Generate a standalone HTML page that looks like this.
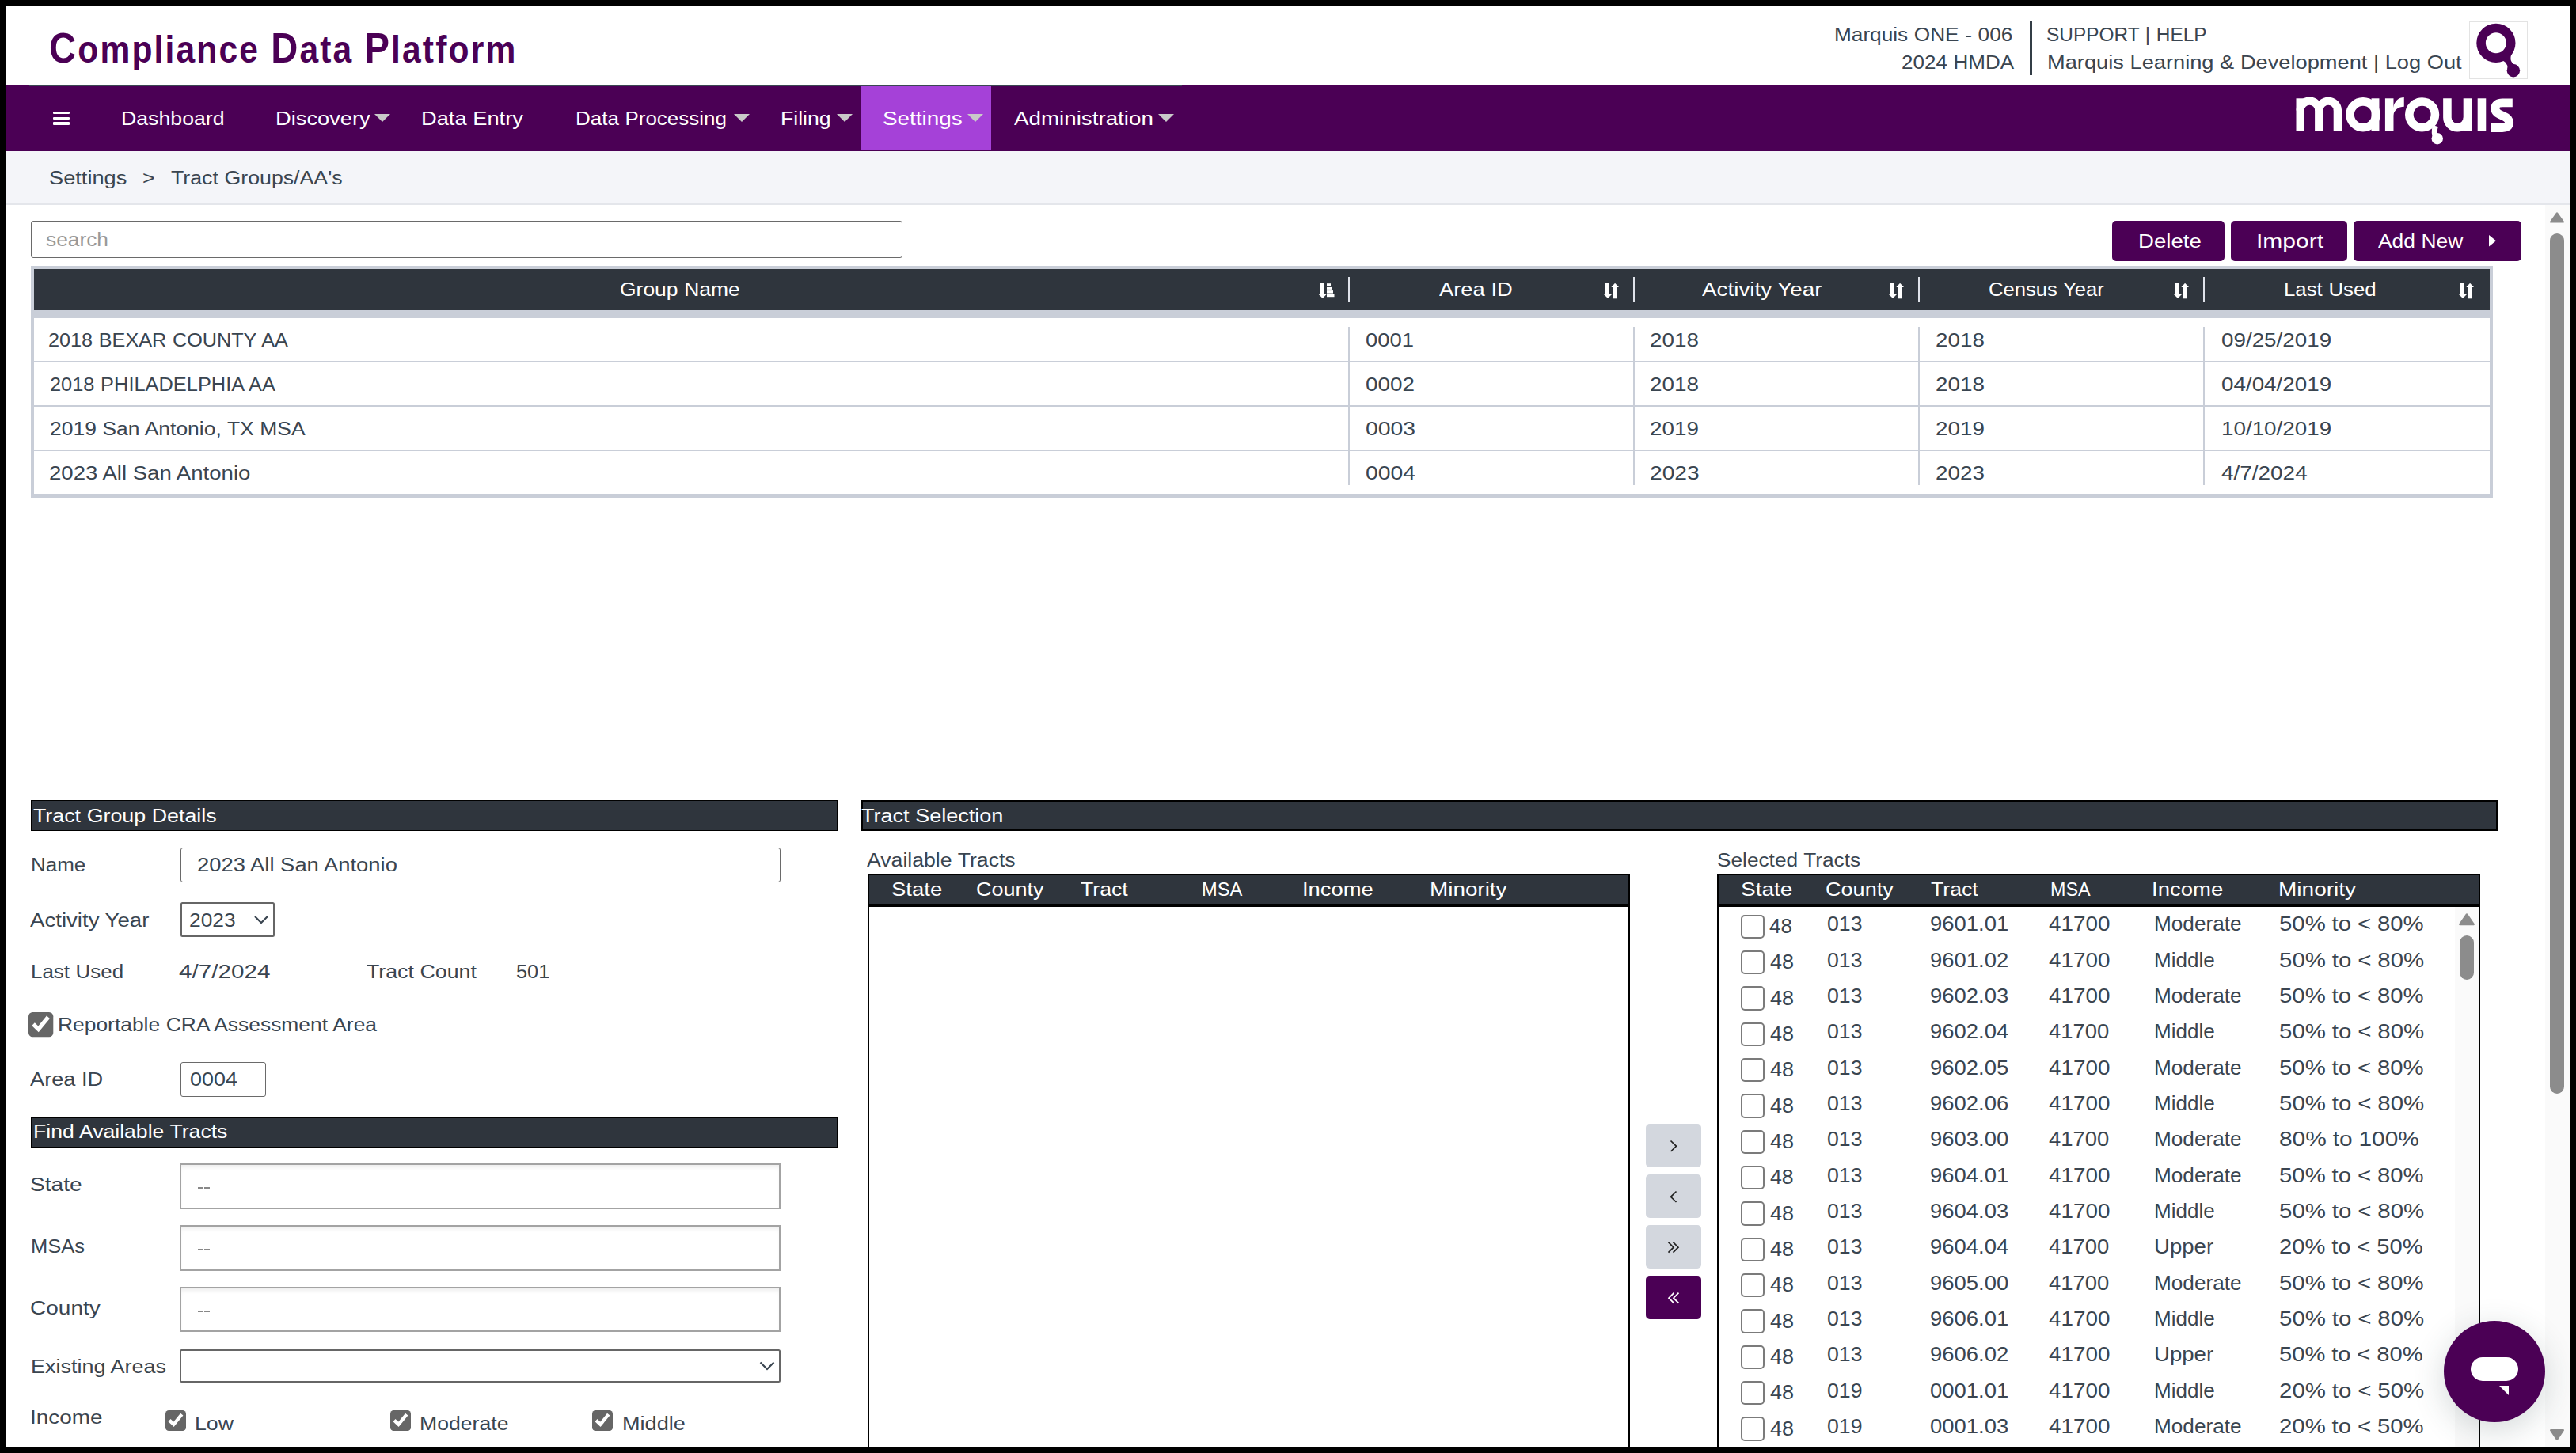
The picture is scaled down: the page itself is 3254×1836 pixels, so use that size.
<!DOCTYPE html>
<html><head><meta charset="utf-8"><title>Tract Groups</title>
<style>
html,body{margin:0;padding:0;width:3254px;height:1836px;overflow:hidden;background:#fff;}
body{position:relative;font-family:"Liberation Sans",sans-serif;}
.t{position:absolute;white-space:nowrap;transform-origin:0 0;}
.r{position:absolute;}
</style></head><body>
<div class="t" style="left:62.0px;top:35.82px;font-size:49px;line-height:49px;color:#4b0055;font-weight:bold;transform:scaleX(0.868);letter-spacing:2.5px;"><span style="font-size:111%">C</span>ompliance <span style="font-size:111%">D</span>ata <span style="font-size:111%">P</span>latform</div>
<div class="t" style="left:2402.00px;top:66.87px;font-size:24.84px;line-height:24.84px;color:#3a4550;transform:scaleX(1.0483);word-spacing:0.37px;">2024 HMDA</div>
<div class="t" style="left:2316.50px;top:32.27px;font-size:24.84px;line-height:24.84px;color:#3a4550;transform:scaleX(1.0553);word-spacing:0.33px;">Marquis ONE - 006</div>
<div class="r" style="left:2564px;top:27px;width:2.50px;height:68.00px;background:#333d46;"></div>
<div class="t" style="left:2585.40px;top:32.27px;font-size:24.84px;line-height:24.84px;color:#3a4550;transform:scaleX(0.9838);word-spacing:0.85px;">SUPPORT | HELP</div>
<div class="t" style="left:2586.00px;top:66.87px;font-size:24.84px;line-height:24.84px;color:#3a4550;transform:scaleX(1.0970);word-spacing:0.05px;">Marquis Learning &amp; Development | Log Out</div>
<div class="r" style="left:3119px;top:27px;width:74.00px;height:73.00px;box-sizing:border-box;border:1px solid #e3e3e3;"></div>
<svg class="r" style="left:3110px;top:20px" width="90" height="90" viewBox="0 0 90 90"><circle cx="42.9" cy="34.3" r="18.8" fill="none" stroke="#4b0055" stroke-width="11.6"/><path d="M48,56 Q58,57 57.5,67 L67,62 Q58,57 63.5,46 Z" fill="#4b0055"/><circle cx="64.9" cy="69.2" r="8.2" fill="#4b0055"/></svg>
<div class="r" style="left:7px;top:107px;width:3240.00px;height:84.00px;background:#4b0055;"></div>
<div class="r" style="left:37px;top:107px;width:1456.00px;height:2.00px;background:#3a4752;"></div>
<div class="r" style="left:1087px;top:109px;width:164.70px;height:80.00px;background:#a541d8;"></div>
<div class="r" style="left:67px;top:140.8px;width:21.00px;height:3.70px;background:#fff;border-radius:1px;"></div>
<div class="r" style="left:67px;top:147.5px;width:21.00px;height:3.70px;background:#fff;border-radius:1px;"></div>
<div class="r" style="left:67px;top:154.3px;width:21.00px;height:3.70px;background:#fff;border-radius:1px;"></div>
<div class="t" style="left:152.50px;top:138.07px;font-size:24.84px;line-height:24.84px;color:#fff;transform:scaleX(1.0747);">Dashboard</div>
<div class="t" style="left:348.40px;top:138.07px;font-size:24.84px;line-height:24.84px;color:#fff;transform:scaleX(1.0982);">Discovery</div>
<svg class="r" style="left:473px;top:144px" width="20" height="10" viewBox="0 0 20 10"><polygon points="0,0 20,0 10,10" fill="#c9c9c9"/></svg>
<div class="t" style="left:531.60px;top:138.07px;font-size:24.84px;line-height:24.84px;color:#fff;transform:scaleX(1.0987);word-spacing:0.04px;">Data Entry</div>
<div class="t" style="left:726.62px;top:138.07px;font-size:24.84px;line-height:24.84px;color:#fff;transform:scaleX(1.0456);word-spacing:0.39px;">Data Processing</div>
<svg class="r" style="left:926.8px;top:144px" width="20" height="10" viewBox="0 0 20 10"><polygon points="0,0 20,0 10,10" fill="#c9c9c9"/></svg>
<div class="t" style="left:986.44px;top:138.07px;font-size:24.84px;line-height:24.84px;color:#fff;transform:scaleX(1.0732);">Filing</div>
<svg class="r" style="left:1057px;top:144px" width="20" height="10" viewBox="0 0 20 10"><polygon points="0,0 20,0 10,10" fill="#c9c9c9"/></svg>
<div class="t" style="left:1115.20px;top:138.07px;font-size:24.84px;line-height:24.84px;color:#fff;transform:scaleX(1.1233);">Settings</div>
<svg class="r" style="left:1222px;top:144px" width="20" height="10" viewBox="0 0 20 10"><polygon points="0,0 20,0 10,10" fill="#c9c9c9"/></svg>
<div class="t" style="left:1280.70px;top:138.07px;font-size:24.84px;line-height:24.84px;color:#fff;transform:scaleX(1.1176);">Administration</div>
<svg class="r" style="left:1462.6px;top:144px" width="20" height="10" viewBox="0 0 20 10"><polygon points="0,0 20,0 10,10" fill="#c9c9c9"/></svg>
<svg class="r" style="left:2880px;top:110px" width="320" height="80" viewBox="0 0 2576 644"><g fill="#fff" stroke="none">
<rect x="165" y="115" width="83" height="335"/>
<rect x="355" y="228" width="85" height="222"/>
<rect x="545" y="228" width="85" height="222"/>
<rect x="930" y="115" width="80" height="335"/>
<rect x="1070" y="115" width="85" height="335"/>
<path d="M1150,215 C1165,140 1210,105 1262,105 L1262,200 C1205,200 1160,235 1152,290 Z"/>
<rect x="1865" y="115" width="85" height="335"/>
<rect x="2010" y="115" width="85" height="335"/>
<circle cx="1600" cy="525" r="58"/>
</g>
<g fill="none" stroke="#fff">
<path d="M206,238 A95,95 0 0 1 397,238" stroke-width="82"/>
<path d="M397,238 A95,95 0 0 1 587,238" stroke-width="82"/>
<circle cx="845" cy="280" r="132" stroke-width="85"/>

<circle cx="1446" cy="280" r="131" stroke-width="86"/>
<path d="M1582,395 C1570,430 1560,470 1590,520" stroke-width="56"/>
<path d="M1702,115 V310 A103,103 0 0 0 1908,310" stroke-width="85"/>
<path d="M2365,160 H2262 C2218,160 2188,180 2188,215 C2188,262 2230,278 2268,293 C2308,310 2332,328 2332,365 C2332,398 2302,415 2262,415 H2145" stroke-width="88"/>
</g></svg>
<div class="r" style="left:7px;top:191px;width:3240.00px;height:66.00px;background:#f4f5f9;"></div>
<div class="r" style="left:7px;top:257px;width:3240.00px;height:2.00px;background:#e4e6eb;"></div>
<div class="t" style="left:61.56px;top:213.17px;font-size:24.84px;line-height:24.84px;color:#3a4550;transform:scaleX(1.0957);">Settings</div>
<div class="t" style="left:180.00px;top:213.17px;font-size:24.84px;line-height:24.84px;color:#3a4550;transform:scaleX(1.0628);">&gt;</div>
<div class="t" style="left:216.00px;top:213.17px;font-size:24.84px;line-height:24.84px;color:#3a4550;transform:scaleX(1.0760);word-spacing:0.19px;">Tract Groups/AA&#x27;s</div>
<div class="r" style="left:3215px;top:259px;width:31.00px;height:1570.00px;background:#fafafa;"></div>
<div class="r" style="left:3246px;top:259px;width:1.00px;height:1570.00px;background:#e8e8e8;"></div>
<svg class="r" style="left:3219px;top:266px" width="22" height="18" viewBox="0 0 22 18"><polygon points="11,3.4 18.8,14.4 3.2,14.4" fill="#8c8c8c" stroke="#8c8c8c" stroke-width="2.4" stroke-linejoin="round"/></svg>
<div class="r" style="left:3221px;top:295px;width:18.00px;height:1087.00px;background:#8c8c8c;border-radius:9px;"></div>
<svg class="r" style="left:3219px;top:1804px" width="22" height="18" viewBox="0 0 22 18"><polygon points="3.2,3.2 18.8,3.2 11,14.8" fill="#8c8c8c" stroke="#8c8c8c" stroke-width="2.4" stroke-linejoin="round"/></svg>
<div class="r" style="left:39px;top:279px;width:1101.00px;height:47.00px;box-sizing:border-box;border:1.6px solid #6a6a6a;border-radius:3px;background:#fff;"></div>
<div class="t" style="left:57.60px;top:290.67px;font-size:24.84px;line-height:24.84px;color:#999;transform:scaleX(1.0593);">search</div>
<div class="r" style="left:2668px;top:279px;width:142.00px;height:51.00px;background:#4b0055;border-radius:5px;"></div>
<div class="t" style="left:2700.68px;top:292.57px;font-size:24.84px;line-height:24.84px;color:#fff;transform:scaleX(1.1118);">Delete</div>
<div class="r" style="left:2818px;top:279px;width:147.00px;height:51.00px;background:#4b0055;border-radius:5px;"></div>
<div class="t" style="left:2849.70px;top:292.57px;font-size:24.84px;line-height:24.84px;color:#fff;transform:scaleX(1.2077);">Import</div>
<div class="r" style="left:2973px;top:279px;width:212.00px;height:51.00px;background:#4b0055;border-radius:5px;"></div>
<div class="t" style="left:3004.46px;top:292.57px;font-size:24.84px;line-height:24.84px;color:#fff;transform:scaleX(1.0619);word-spacing:0.28px;">Add New</div>
<svg class="r" style="left:3143px;top:296px" width="11" height="17" viewBox="0 0 11 17"><polygon points="1,1 10,8.3 1,15.6" fill="#fff"/></svg>
<div class="r" style="left:39px;top:336px;width:3110.00px;height:293.00px;background:#c9ced8;"></div>
<div class="r" style="left:43px;top:340px;width:3102.00px;height:51.70px;background:#2f353d;"></div>
<div class="r" style="left:43px;top:402px;width:3102.00px;height:222.00px;background:#fff;"></div>
<div class="r" style="left:43px;top:456px;width:3102.00px;height:2.00px;background:#c9ced8;"></div>
<div class="r" style="left:43px;top:512px;width:3102.00px;height:2.00px;background:#c9ced8;"></div>
<div class="r" style="left:43px;top:568px;width:3102.00px;height:2.00px;background:#c9ced8;"></div>
<div class="r" style="left:1703px;top:413px;width:2.00px;height:199.50px;background:#c9ced8;"></div>
<div class="r" style="left:1703px;top:350px;width:2.30px;height:32.00px;background:#dfe2ea;"></div>
<div class="r" style="left:2063px;top:413px;width:2.00px;height:199.50px;background:#c9ced8;"></div>
<div class="r" style="left:2063px;top:350px;width:2.30px;height:32.00px;background:#dfe2ea;"></div>
<div class="r" style="left:2423px;top:413px;width:2.00px;height:199.50px;background:#c9ced8;"></div>
<div class="r" style="left:2423px;top:350px;width:2.30px;height:32.00px;background:#dfe2ea;"></div>
<div class="r" style="left:2783px;top:413px;width:2.00px;height:199.50px;background:#c9ced8;"></div>
<div class="r" style="left:2783px;top:350px;width:2.30px;height:32.00px;background:#dfe2ea;"></div>
<div class="t" style="left:782.90px;top:354.07px;font-size:24.84px;line-height:24.84px;color:#fff;transform:scaleX(1.0655);word-spacing:0.26px;">Group Name</div>
<div class="t" style="left:1818.40px;top:354.07px;font-size:24.84px;line-height:24.84px;color:#fff;transform:scaleX(1.1012);word-spacing:0.03px;">Area ID</div>
<div class="t" style="left:2150.00px;top:354.07px;font-size:24.84px;line-height:24.84px;color:#fff;transform:scaleX(1.1209);word-spacing:-0.10px;">Activity Year</div>
<div class="t" style="left:2512.30px;top:354.07px;font-size:24.84px;line-height:24.84px;color:#fff;transform:scaleX(1.0314);word-spacing:0.49px;">Census Year</div>
<div class="t" style="left:2885.44px;top:354.07px;font-size:24.84px;line-height:24.84px;color:#fff;transform:scaleX(1.0392);word-spacing:0.44px;">Last Used</div>
<svg class="r" style="left:1660px;top:352px" width="30" height="30" viewBox="0 0 30 30"><g fill="#fff"><rect x="8" y="5.7" width="5" height="14.5"/><polygon points="5.8,20 15.6,20 10.7,25"/><rect x="16" y="6.2" width="5" height="3"/><rect x="16" y="10.9" width="6" height="3"/><rect x="16" y="15.1" width="8" height="3.5"/><rect x="16" y="19.9" width="9.5" height="3.3"/></g></svg>
<svg class="r" style="left:2024px;top:352px" width="24" height="30" viewBox="0 0 24 30"><g fill="#fff"><rect x="4" y="5.7" width="5" height="14.5"/><polygon points="2,20 12,20 7,25"/><rect x="14" y="10.8" width="4.2" height="14.5"/><polygon points="11.3,11 21,11 16.1,5.7"/></g></svg>
<svg class="r" style="left:2384px;top:352px" width="24" height="30" viewBox="0 0 24 30"><g fill="#fff"><rect x="4" y="5.7" width="5" height="14.5"/><polygon points="2,20 12,20 7,25"/><rect x="14" y="10.8" width="4.2" height="14.5"/><polygon points="11.3,11 21,11 16.1,5.7"/></g></svg>
<svg class="r" style="left:2744px;top:352px" width="24" height="30" viewBox="0 0 24 30"><g fill="#fff"><rect x="4" y="5.7" width="5" height="14.5"/><polygon points="2,20 12,20 7,25"/><rect x="14" y="10.8" width="4.2" height="14.5"/><polygon points="11.3,11 21,11 16.1,5.7"/></g></svg>
<svg class="r" style="left:3104px;top:352px" width="24" height="30" viewBox="0 0 24 30"><g fill="#fff"><rect x="4" y="5.7" width="5" height="14.5"/><polygon points="2,20 12,20 7,25"/><rect x="14" y="10.8" width="4.2" height="14.5"/><polygon points="11.3,11 21,11 16.1,5.7"/></g></svg>
<div class="t" style="left:61.32px;top:417.57px;font-size:24.84px;line-height:24.84px;color:#3a4550;transform:scaleX(1.0162);word-spacing:0.61px;">2018 BEXAR COUNTY AA</div>
<div class="t" style="left:1725.40px;top:417.57px;font-size:24.84px;line-height:24.84px;color:#3a4550;transform:scaleX(1.1033);">0001</div>
<div class="t" style="left:2084.32px;top:417.57px;font-size:24.84px;line-height:24.84px;color:#3a4550;transform:scaleX(1.1214);">2018</div>
<div class="t" style="left:2445.00px;top:417.57px;font-size:24.84px;line-height:24.84px;color:#3a4550;transform:scaleX(1.1214);">2018</div>
<div class="t" style="left:2805.50px;top:417.57px;font-size:24.84px;line-height:24.84px;color:#3a4550;transform:scaleX(1.1197);">09/25/2019</div>
<div class="t" style="left:63.40px;top:473.57px;font-size:24.84px;line-height:24.84px;color:#3a4550;transform:scaleX(1.0227);word-spacing:0.56px;">2018 PHILADELPHIA AA</div>
<div class="t" style="left:1725.40px;top:473.57px;font-size:24.84px;line-height:24.84px;color:#3a4550;transform:scaleX(1.1207);">0002</div>
<div class="t" style="left:2084.32px;top:473.57px;font-size:24.84px;line-height:24.84px;color:#3a4550;transform:scaleX(1.1214);">2018</div>
<div class="t" style="left:2445.00px;top:473.57px;font-size:24.84px;line-height:24.84px;color:#3a4550;transform:scaleX(1.1214);">2018</div>
<div class="t" style="left:2805.50px;top:473.57px;font-size:24.84px;line-height:24.84px;color:#3a4550;transform:scaleX(1.1197);">04/04/2019</div>
<div class="t" style="left:63.40px;top:529.57px;font-size:24.84px;line-height:24.84px;color:#3a4550;transform:scaleX(1.0653);word-spacing:0.26px;">2019 San Antonio, TX MSA</div>
<div class="t" style="left:1725.40px;top:529.57px;font-size:24.84px;line-height:24.84px;color:#3a4550;transform:scaleX(1.1431);">0003</div>
<div class="t" style="left:2084.32px;top:529.57px;font-size:24.84px;line-height:24.84px;color:#3a4550;transform:scaleX(1.1214);">2019</div>
<div class="t" style="left:2445.00px;top:529.57px;font-size:24.84px;line-height:24.84px;color:#3a4550;transform:scaleX(1.1214);">2019</div>
<div class="t" style="left:2805.50px;top:529.57px;font-size:24.84px;line-height:24.84px;color:#3a4550;transform:scaleX(1.1197);">10/10/2019</div>
<div class="t" style="left:62.40px;top:585.57px;font-size:24.84px;line-height:24.84px;color:#3a4550;transform:scaleX(1.1103);word-spacing:-0.03px;">2023 All San Antonio</div>
<div class="t" style="left:1725.40px;top:585.57px;font-size:24.84px;line-height:24.84px;color:#3a4550;transform:scaleX(1.1410);">0004</div>
<div class="t" style="left:2084.32px;top:585.57px;font-size:24.84px;line-height:24.84px;color:#3a4550;transform:scaleX(1.1359);">2023</div>
<div class="t" style="left:2445.00px;top:585.57px;font-size:24.84px;line-height:24.84px;color:#3a4550;transform:scaleX(1.1214);">2023</div>
<div class="t" style="left:2805.50px;top:585.57px;font-size:24.84px;line-height:24.84px;color:#3a4550;transform:scaleX(1.1242);">4/7/2024</div>
<div class="r" style="left:39px;top:1011px;width:1019.00px;height:39.00px;box-sizing:border-box;border:1.7px solid #000;background:#2f353d;"></div>
<div class="t" style="left:42.00px;top:1018.67px;font-size:24.84px;line-height:24.84px;color:#fff;transform:scaleX(1.0789);word-spacing:0.17px;">Tract Group Details</div>
<div class="t" style="left:39.48px;top:1081.17px;font-size:24.84px;line-height:24.84px;color:#3a4550;transform:scaleX(1.0459);">Name</div>
<div class="r" style="left:227.6px;top:1070.6px;width:758.20px;height:44.80px;box-sizing:border-box;border:1.6px solid #6a6a6a;border-radius:3px;"></div>
<div class="t" style="left:249.30px;top:1081.17px;font-size:24.84px;line-height:24.84px;color:#3a4550;transform:scaleX(1.1033);word-spacing:0.01px;">2023 All San Antonio</div>
<div class="t" style="left:38.04px;top:1150.67px;font-size:24.84px;line-height:24.84px;color:#3a4550;transform:scaleX(1.1119);word-spacing:-0.04px;">Activity Year</div>
<div class="r" style="left:227.6px;top:1140px;width:119.40px;height:43.60px;box-sizing:border-box;border:2px solid #666;border-radius:2.5px;"></div>
<div class="t" style="left:238.70px;top:1150.67px;font-size:24.84px;line-height:24.84px;color:#3a4550;transform:scaleX(1.0610);">2023</div>
<svg class="r" style="left:320px;top:1155px" width="20" height="14" viewBox="0 0 20 14"><polyline points="2,3 10,11 18,3" fill="none" stroke="#3a4550" stroke-width="2.2"/></svg>
<div class="t" style="left:38.76px;top:1215.67px;font-size:24.84px;line-height:24.84px;color:#3a4550;transform:scaleX(1.0441);word-spacing:0.40px;">Last Used</div>
<div class="t" style="left:226.00px;top:1215.67px;font-size:24.84px;line-height:24.84px;color:#3a4550;transform:scaleX(1.1954);">4/7/2024</div>
<div class="t" style="left:463.40px;top:1215.67px;font-size:24.84px;line-height:24.84px;color:#3a4550;transform:scaleX(1.0762);word-spacing:0.19px;">Tract Count</div>
<div class="t" style="left:652.12px;top:1215.67px;font-size:24.84px;line-height:24.84px;color:#3a4550;transform:scaleX(1.0213);">501</div>
<svg class="r" style="left:36.3px;top:1279.3px" width="31.3" height="31.3" viewBox="0 0 30 30"><rect x="0" y="0" width="30" height="30" rx="5" fill="#666"/><polyline points="5.8,14.6 12,20.6 23.9,6.0" fill="none" stroke="#fff" stroke-width="5"/></svg>
<div class="t" style="left:73.24px;top:1282.67px;font-size:24.84px;line-height:24.84px;color:#3a4550;transform:scaleX(1.0635);word-spacing:0.27px;">Reportable CRA Assessment Area</div>
<div class="t" style="left:38.34px;top:1352.47px;font-size:24.84px;line-height:24.84px;color:#3a4550;transform:scaleX(1.0950);word-spacing:0.06px;">Area ID</div>
<div class="r" style="left:227.8px;top:1341.6px;width:108.70px;height:44.60px;box-sizing:border-box;border:1.6px solid #6a6a6a;border-radius:3px;"></div>
<div class="t" style="left:239.64px;top:1352.47px;font-size:24.84px;line-height:24.84px;color:#3a4550;transform:scaleX(1.0849);">0004</div>
<div class="r" style="left:39px;top:1411.5px;width:1019.00px;height:38.00px;box-sizing:border-box;border:1.7px solid #000;background:#2f353d;"></div>
<div class="t" style="left:41.88px;top:1418.47px;font-size:24.84px;line-height:24.84px;color:#fff;transform:scaleX(1.0712);word-spacing:0.22px;">Find Available Tracts</div>
<div class="t" style="left:38.36px;top:1484.87px;font-size:24.84px;line-height:24.84px;color:#3a4550;transform:scaleX(1.1349);">State</div>
<div class="r" style="left:227.2px;top:1470.0px;width:758.60px;height:57.80px;box-sizing:border-box;border:2px solid #a3a3a3;box-shadow:inset 0 5px 6px -3px rgba(0,0,0,0.09);"></div>
<div class="r" style="left:250px;top:1500.35px;width:7.20px;height:1.60px;background:#888;"></div>
<div class="r" style="left:258.3px;top:1500.35px;width:7.20px;height:1.60px;background:#888;"></div>
<div class="t" style="left:39.00px;top:1562.67px;font-size:24.84px;line-height:24.84px;color:#3a4550;transform:scaleX(1.0281);">MSAs</div>
<div class="r" style="left:227.2px;top:1548.3px;width:758.60px;height:57.30px;box-sizing:border-box;border:2px solid #a3a3a3;box-shadow:inset 0 5px 6px -3px rgba(0,0,0,0.09);"></div>
<div class="r" style="left:250px;top:1578.3999999999999px;width:7.20px;height:1.60px;background:#888;"></div>
<div class="r" style="left:258.3px;top:1578.3999999999999px;width:7.20px;height:1.60px;background:#888;"></div>
<div class="t" style="left:38.00px;top:1641.07px;font-size:24.84px;line-height:24.84px;color:#3a4550;transform:scaleX(1.1281);">County</div>
<div class="r" style="left:227.2px;top:1626.2px;width:758.60px;height:57.30px;box-sizing:border-box;border:2px solid #a3a3a3;box-shadow:inset 0 5px 6px -3px rgba(0,0,0,0.09);"></div>
<div class="r" style="left:250px;top:1656.3px;width:7.20px;height:1.60px;background:#888;"></div>
<div class="r" style="left:258.3px;top:1656.3px;width:7.20px;height:1.60px;background:#888;"></div>
<div class="t" style="left:39.00px;top:1714.67px;font-size:24.84px;line-height:24.84px;color:#3a4550;transform:scaleX(1.0860);word-spacing:0.12px;">Existing Areas</div>
<div class="r" style="left:227.4px;top:1705px;width:758.20px;height:42.20px;box-sizing:border-box;border:2px solid #666;border-radius:2.5px;"></div>
<svg class="r" style="left:958px;top:1719px" width="22" height="15" viewBox="0 0 22 15"><polyline points="2.5,2.5 11,11 19.5,2.5" fill="none" stroke="#3a4550" stroke-width="2.2"/></svg>
<div class="t" style="left:38.00px;top:1779.27px;font-size:24.84px;line-height:24.84px;color:#3a4550;transform:scaleX(1.1238);">Income</div>
<svg class="r" style="left:209.3px;top:1782px" width="26" height="26" viewBox="0 0 30 30"><rect x="0" y="0" width="30" height="30" rx="5" fill="#666"/><polyline points="5.8,14.6 12,20.6 23.9,6.0" fill="none" stroke="#fff" stroke-width="5"/></svg>
<div class="t" style="left:246.40px;top:1787.17px;font-size:24.84px;line-height:24.84px;color:#3a4550;transform:scaleX(1.0766);">Low</div>
<svg class="r" style="left:493.3px;top:1782px" width="26" height="26" viewBox="0 0 30 30"><rect x="0" y="0" width="30" height="30" rx="5" fill="#666"/><polyline points="5.8,14.6 12,20.6 23.9,6.0" fill="none" stroke="#fff" stroke-width="5"/></svg>
<div class="t" style="left:530.32px;top:1787.17px;font-size:24.84px;line-height:24.84px;color:#3a4550;transform:scaleX(1.0721);">Moderate</div>
<svg class="r" style="left:748.3px;top:1782px" width="26" height="26" viewBox="0 0 30 30"><rect x="0" y="0" width="30" height="30" rx="5" fill="#666"/><polyline points="5.8,14.6 12,20.6 23.9,6.0" fill="none" stroke="#fff" stroke-width="5"/></svg>
<div class="t" style="left:785.60px;top:1787.17px;font-size:24.84px;line-height:24.84px;color:#3a4550;transform:scaleX(1.0922);">Middle</div>
<div class="r" style="left:1088px;top:1011px;width:2067.00px;height:39.00px;box-sizing:border-box;border:2px solid #000;background:#2f353d;"></div>
<div class="t" style="left:1088.28px;top:1018.67px;font-size:24.84px;line-height:24.84px;color:#fff;transform:scaleX(1.0888);word-spacing:0.10px;">Tract Selection</div>
<div class="t" style="left:1094.98px;top:1075.37px;font-size:24.84px;line-height:24.84px;color:#3a4550;transform:scaleX(1.0724);word-spacing:0.21px;">Available Tracts</div>
<div class="t" style="left:2169.34px;top:1075.37px;font-size:24.84px;line-height:24.84px;color:#3a4550;transform:scaleX(1.0564);word-spacing:0.32px;">Selected Tracts</div>
<div class="r" style="left:1096px;top:1104px;width:963.00px;height:736.00px;box-sizing:border-box;border:2px solid #000;background:#fff;"></div>
<div class="r" style="left:1098px;top:1106px;width:959.00px;height:36.00px;background:#2f353d;"></div>
<div class="r" style="left:1098px;top:1142px;width:959.00px;height:4.00px;background:#000;"></div>
<div class="t" style="left:1126.44px;top:1111.87px;font-size:24.84px;line-height:24.84px;color:#fff;transform:scaleX(1.1080);">State</div>
<div class="t" style="left:1232.82px;top:1111.87px;font-size:24.84px;line-height:24.84px;color:#fff;transform:scaleX(1.0880);">County</div>
<div class="t" style="left:1365.10px;top:1111.87px;font-size:24.84px;line-height:24.84px;color:#fff;transform:scaleX(1.0743);">Tract</div>
<div class="t" style="left:1517.76px;top:1111.87px;font-size:24.84px;line-height:24.84px;color:#fff;transform:scaleX(0.9524);">MSA</div>
<div class="t" style="left:1644.64px;top:1111.87px;font-size:24.84px;line-height:24.84px;color:#fff;transform:scaleX(1.1032);">Income</div>
<div class="t" style="left:1805.86px;top:1111.87px;font-size:24.84px;line-height:24.84px;color:#fff;transform:scaleX(1.1219);">Minority</div>
<div class="r" style="left:2169px;top:1104px;width:964.00px;height:736.00px;box-sizing:border-box;border:2px solid #000;background:#fff;"></div>
<div class="r" style="left:2171px;top:1106px;width:960.00px;height:36.00px;background:#2f353d;"></div>
<div class="r" style="left:2171px;top:1142px;width:960.00px;height:4.00px;background:#000;"></div>
<div class="t" style="left:2198.84px;top:1111.87px;font-size:24.84px;line-height:24.84px;color:#fff;transform:scaleX(1.1291);">State</div>
<div class="t" style="left:2306.14px;top:1111.87px;font-size:24.84px;line-height:24.84px;color:#fff;transform:scaleX(1.0903);">County</div>
<div class="t" style="left:2438.96px;top:1111.87px;font-size:24.84px;line-height:24.84px;color:#fff;transform:scaleX(1.0747);">Tract</div>
<div class="t" style="left:2590.00px;top:1111.87px;font-size:24.84px;line-height:24.84px;color:#fff;transform:scaleX(0.9402);">MSA</div>
<div class="t" style="left:2717.90px;top:1111.87px;font-size:24.84px;line-height:24.84px;color:#fff;transform:scaleX(1.1086);">Income</div>
<div class="t" style="left:2877.72px;top:1111.87px;font-size:24.84px;line-height:24.84px;color:#fff;transform:scaleX(1.1286);">Minority</div>
<div class="r" style="left:3101px;top:1146px;width:30.00px;height:683.00px;background:#fafafa;"></div>
<svg class="r" style="left:3105px;top:1153px" width="22" height="18" viewBox="0 0 22 18"><polygon points="11,2.5 19.6,15 2.4,15" fill="#8c8c8c" stroke="#8c8c8c" stroke-width="2.6" stroke-linejoin="round"/></svg>
<div class="r" style="left:3107px;top:1182px;width:18.00px;height:56.00px;background:#8c8c8c;border-radius:9px;"></div>
<div class="r" style="left:2199px;top:1155.6px;width:30.20px;height:30.30px;box-sizing:border-box;border:2px solid #7b7b7b;border-radius:5px;"></div>
<div class="t" style="left:2234.50px;top:1158.16px;font-size:25.56px;line-height:25.56px;color:#3a4550;transform:scaleX(1.0162);">48</div>
<div class="t" style="left:2307.70px;top:1155.46px;font-size:25.56px;line-height:25.56px;color:#3a4550;transform:scaleX(1.0430);">013</div>
<div class="t" style="left:2438.34px;top:1155.46px;font-size:25.56px;line-height:25.56px;color:#3a4550;transform:scaleX(1.0738);">9601.01</div>
<div class="t" style="left:2587.74px;top:1155.46px;font-size:25.56px;line-height:25.56px;color:#3a4550;transform:scaleX(1.0894);">41700</div>
<div class="t" style="left:2721.16px;top:1155.46px;font-size:25.56px;line-height:25.56px;color:#3a4550;transform:scaleX(1.0240);">Moderate</div>
<div class="t" style="left:2878.66px;top:1155.46px;font-size:25.56px;line-height:25.56px;color:#3a4550;transform:scaleX(1.1489);word-spacing:-0.27px;">50% to &lt; 80%</div>
<div class="r" style="left:2199px;top:1200.9299999999998px;width:30.20px;height:30.30px;box-sizing:border-box;border:2px solid #7b7b7b;border-radius:5px;"></div>
<div class="t" style="left:2235.78px;top:1203.49px;font-size:25.56px;line-height:25.56px;color:#3a4550;transform:scaleX(1.0598);">48</div>
<div class="t" style="left:2307.70px;top:1200.79px;font-size:25.56px;line-height:25.56px;color:#3a4550;transform:scaleX(1.0430);">013</div>
<div class="t" style="left:2438.34px;top:1200.79px;font-size:25.56px;line-height:25.56px;color:#3a4550;transform:scaleX(1.0738);">9601.02</div>
<div class="t" style="left:2587.74px;top:1200.79px;font-size:25.56px;line-height:25.56px;color:#3a4550;transform:scaleX(1.0894);">41700</div>
<div class="t" style="left:2721.16px;top:1200.79px;font-size:25.56px;line-height:25.56px;color:#3a4550;transform:scaleX(1.0198);">Middle</div>
<div class="t" style="left:2878.66px;top:1200.79px;font-size:25.56px;line-height:25.56px;color:#3a4550;transform:scaleX(1.1529);word-spacing:-0.29px;">50% to &lt; 80%</div>
<div class="r" style="left:2199px;top:1246.26px;width:30.20px;height:30.30px;box-sizing:border-box;border:2px solid #7b7b7b;border-radius:5px;"></div>
<div class="t" style="left:2235.78px;top:1248.82px;font-size:25.56px;line-height:25.56px;color:#3a4550;transform:scaleX(1.0598);">48</div>
<div class="t" style="left:2307.70px;top:1246.12px;font-size:25.56px;line-height:25.56px;color:#3a4550;transform:scaleX(1.0430);">013</div>
<div class="t" style="left:2438.34px;top:1246.12px;font-size:25.56px;line-height:25.56px;color:#3a4550;transform:scaleX(1.0738);">9602.03</div>
<div class="t" style="left:2587.74px;top:1246.12px;font-size:25.56px;line-height:25.56px;color:#3a4550;transform:scaleX(1.0894);">41700</div>
<div class="t" style="left:2721.16px;top:1246.12px;font-size:25.56px;line-height:25.56px;color:#3a4550;transform:scaleX(1.0240);">Moderate</div>
<div class="t" style="left:2878.66px;top:1246.12px;font-size:25.56px;line-height:25.56px;color:#3a4550;transform:scaleX(1.1489);word-spacing:-0.27px;">50% to &lt; 80%</div>
<div class="r" style="left:2199px;top:1291.59px;width:30.20px;height:30.30px;box-sizing:border-box;border:2px solid #7b7b7b;border-radius:5px;"></div>
<div class="t" style="left:2235.78px;top:1294.15px;font-size:25.56px;line-height:25.56px;color:#3a4550;transform:scaleX(1.0598);">48</div>
<div class="t" style="left:2307.70px;top:1291.45px;font-size:25.56px;line-height:25.56px;color:#3a4550;transform:scaleX(1.0430);">013</div>
<div class="t" style="left:2438.34px;top:1291.45px;font-size:25.56px;line-height:25.56px;color:#3a4550;transform:scaleX(1.0738);">9602.04</div>
<div class="t" style="left:2587.74px;top:1291.45px;font-size:25.56px;line-height:25.56px;color:#3a4550;transform:scaleX(1.0753);">41700</div>
<div class="t" style="left:2721.16px;top:1291.45px;font-size:25.56px;line-height:25.56px;color:#3a4550;transform:scaleX(1.0198);">Middle</div>
<div class="t" style="left:2878.66px;top:1291.45px;font-size:25.56px;line-height:25.56px;color:#3a4550;transform:scaleX(1.1529);word-spacing:-0.29px;">50% to &lt; 80%</div>
<div class="r" style="left:2199px;top:1336.9199999999998px;width:30.20px;height:30.30px;box-sizing:border-box;border:2px solid #7b7b7b;border-radius:5px;"></div>
<div class="t" style="left:2235.78px;top:1339.48px;font-size:25.56px;line-height:25.56px;color:#3a4550;transform:scaleX(1.0598);">48</div>
<div class="t" style="left:2307.70px;top:1336.78px;font-size:25.56px;line-height:25.56px;color:#3a4550;transform:scaleX(1.0430);">013</div>
<div class="t" style="left:2438.34px;top:1336.78px;font-size:25.56px;line-height:25.56px;color:#3a4550;transform:scaleX(1.0738);">9602.05</div>
<div class="t" style="left:2587.74px;top:1336.78px;font-size:25.56px;line-height:25.56px;color:#3a4550;transform:scaleX(1.0894);">41700</div>
<div class="t" style="left:2721.16px;top:1336.78px;font-size:25.56px;line-height:25.56px;color:#3a4550;transform:scaleX(1.0240);">Moderate</div>
<div class="t" style="left:2878.66px;top:1336.78px;font-size:25.56px;line-height:25.56px;color:#3a4550;transform:scaleX(1.1489);word-spacing:-0.27px;">50% to &lt; 80%</div>
<div class="r" style="left:2199px;top:1382.25px;width:30.20px;height:30.30px;box-sizing:border-box;border:2px solid #7b7b7b;border-radius:5px;"></div>
<div class="t" style="left:2235.78px;top:1384.81px;font-size:25.56px;line-height:25.56px;color:#3a4550;transform:scaleX(1.0598);">48</div>
<div class="t" style="left:2307.70px;top:1382.11px;font-size:25.56px;line-height:25.56px;color:#3a4550;transform:scaleX(1.0430);">013</div>
<div class="t" style="left:2438.34px;top:1382.11px;font-size:25.56px;line-height:25.56px;color:#3a4550;transform:scaleX(1.0738);">9602.06</div>
<div class="t" style="left:2587.74px;top:1382.11px;font-size:25.56px;line-height:25.56px;color:#3a4550;transform:scaleX(1.0894);">41700</div>
<div class="t" style="left:2721.16px;top:1382.11px;font-size:25.56px;line-height:25.56px;color:#3a4550;transform:scaleX(1.0198);">Middle</div>
<div class="t" style="left:2878.66px;top:1382.11px;font-size:25.56px;line-height:25.56px;color:#3a4550;transform:scaleX(1.1529);word-spacing:-0.29px;">50% to &lt; 80%</div>
<div class="r" style="left:2199px;top:1427.58px;width:30.20px;height:30.30px;box-sizing:border-box;border:2px solid #7b7b7b;border-radius:5px;"></div>
<div class="t" style="left:2235.78px;top:1430.14px;font-size:25.56px;line-height:25.56px;color:#3a4550;transform:scaleX(1.0598);">48</div>
<div class="t" style="left:2307.70px;top:1427.44px;font-size:25.56px;line-height:25.56px;color:#3a4550;transform:scaleX(1.0430);">013</div>
<div class="t" style="left:2438.34px;top:1427.44px;font-size:25.56px;line-height:25.56px;color:#3a4550;transform:scaleX(1.0738);">9603.00</div>
<div class="t" style="left:2587.74px;top:1427.44px;font-size:25.56px;line-height:25.56px;color:#3a4550;transform:scaleX(1.0753);">41700</div>
<div class="t" style="left:2721.16px;top:1427.44px;font-size:25.56px;line-height:25.56px;color:#3a4550;transform:scaleX(1.0240);">Moderate</div>
<div class="t" style="left:2878.66px;top:1427.44px;font-size:25.56px;line-height:25.56px;color:#3a4550;transform:scaleX(1.1694);word-spacing:-0.39px;">80% to 100%</div>
<div class="r" style="left:2199px;top:1472.9099999999999px;width:30.20px;height:30.30px;box-sizing:border-box;border:2px solid #7b7b7b;border-radius:5px;"></div>
<div class="t" style="left:2235.78px;top:1475.47px;font-size:25.56px;line-height:25.56px;color:#3a4550;transform:scaleX(1.0443);">48</div>
<div class="t" style="left:2307.70px;top:1472.77px;font-size:25.56px;line-height:25.56px;color:#3a4550;transform:scaleX(1.0430);">013</div>
<div class="t" style="left:2438.34px;top:1472.77px;font-size:25.56px;line-height:25.56px;color:#3a4550;transform:scaleX(1.0738);">9604.01</div>
<div class="t" style="left:2587.74px;top:1472.77px;font-size:25.56px;line-height:25.56px;color:#3a4550;transform:scaleX(1.0894);">41700</div>
<div class="t" style="left:2721.16px;top:1472.77px;font-size:25.56px;line-height:25.56px;color:#3a4550;transform:scaleX(1.0240);">Moderate</div>
<div class="t" style="left:2878.66px;top:1472.77px;font-size:25.56px;line-height:25.56px;color:#3a4550;transform:scaleX(1.1489);word-spacing:-0.27px;">50% to &lt; 80%</div>
<div class="r" style="left:2199px;top:1518.2399999999998px;width:30.20px;height:30.30px;box-sizing:border-box;border:2px solid #7b7b7b;border-radius:5px;"></div>
<div class="t" style="left:2235.78px;top:1520.80px;font-size:25.56px;line-height:25.56px;color:#3a4550;transform:scaleX(1.0598);">48</div>
<div class="t" style="left:2307.70px;top:1518.10px;font-size:25.56px;line-height:25.56px;color:#3a4550;transform:scaleX(1.0430);">013</div>
<div class="t" style="left:2438.34px;top:1518.10px;font-size:25.56px;line-height:25.56px;color:#3a4550;transform:scaleX(1.0738);">9604.03</div>
<div class="t" style="left:2587.74px;top:1518.10px;font-size:25.56px;line-height:25.56px;color:#3a4550;transform:scaleX(1.0894);">41700</div>
<div class="t" style="left:2721.16px;top:1518.10px;font-size:25.56px;line-height:25.56px;color:#3a4550;transform:scaleX(1.0198);">Middle</div>
<div class="t" style="left:2878.66px;top:1518.10px;font-size:25.56px;line-height:25.56px;color:#3a4550;transform:scaleX(1.1529);word-spacing:-0.29px;">50% to &lt; 80%</div>
<div class="r" style="left:2199px;top:1563.57px;width:30.20px;height:30.30px;box-sizing:border-box;border:2px solid #7b7b7b;border-radius:5px;"></div>
<div class="t" style="left:2235.78px;top:1566.13px;font-size:25.56px;line-height:25.56px;color:#3a4550;transform:scaleX(1.0598);">48</div>
<div class="t" style="left:2307.70px;top:1563.43px;font-size:25.56px;line-height:25.56px;color:#3a4550;transform:scaleX(1.0430);">013</div>
<div class="t" style="left:2438.34px;top:1563.43px;font-size:25.56px;line-height:25.56px;color:#3a4550;transform:scaleX(1.0738);">9604.04</div>
<div class="t" style="left:2587.74px;top:1563.43px;font-size:25.56px;line-height:25.56px;color:#3a4550;transform:scaleX(1.0753);">41700</div>
<div class="t" style="left:2721.16px;top:1563.43px;font-size:25.56px;line-height:25.56px;color:#3a4550;transform:scaleX(1.0798);">Upper</div>
<div class="t" style="left:2878.66px;top:1563.43px;font-size:25.56px;line-height:25.56px;color:#3a4550;transform:scaleX(1.1412);word-spacing:-0.22px;">20% to &lt; 50%</div>
<div class="r" style="left:2199px;top:1608.8999999999999px;width:30.20px;height:30.30px;box-sizing:border-box;border:2px solid #7b7b7b;border-radius:5px;"></div>
<div class="t" style="left:2235.78px;top:1611.46px;font-size:25.56px;line-height:25.56px;color:#3a4550;transform:scaleX(1.0598);">48</div>
<div class="t" style="left:2307.70px;top:1608.76px;font-size:25.56px;line-height:25.56px;color:#3a4550;transform:scaleX(1.0430);">013</div>
<div class="t" style="left:2438.34px;top:1608.76px;font-size:25.56px;line-height:25.56px;color:#3a4550;transform:scaleX(1.0738);">9605.00</div>
<div class="t" style="left:2587.74px;top:1608.76px;font-size:25.56px;line-height:25.56px;color:#3a4550;transform:scaleX(1.0753);">41700</div>
<div class="t" style="left:2721.16px;top:1608.76px;font-size:25.56px;line-height:25.56px;color:#3a4550;transform:scaleX(1.0240);">Moderate</div>
<div class="t" style="left:2878.66px;top:1608.76px;font-size:25.56px;line-height:25.56px;color:#3a4550;transform:scaleX(1.1489);word-spacing:-0.27px;">50% to &lt; 80%</div>
<div class="r" style="left:2199px;top:1654.23px;width:30.20px;height:30.30px;box-sizing:border-box;border:2px solid #7b7b7b;border-radius:5px;"></div>
<div class="t" style="left:2235.78px;top:1656.79px;font-size:25.56px;line-height:25.56px;color:#3a4550;transform:scaleX(1.0598);">48</div>
<div class="t" style="left:2307.70px;top:1654.09px;font-size:25.56px;line-height:25.56px;color:#3a4550;transform:scaleX(1.0430);">013</div>
<div class="t" style="left:2438.34px;top:1654.09px;font-size:25.56px;line-height:25.56px;color:#3a4550;transform:scaleX(1.0738);">9606.01</div>
<div class="t" style="left:2587.74px;top:1654.09px;font-size:25.56px;line-height:25.56px;color:#3a4550;transform:scaleX(1.0894);">41700</div>
<div class="t" style="left:2721.16px;top:1654.09px;font-size:25.56px;line-height:25.56px;color:#3a4550;transform:scaleX(1.0198);">Middle</div>
<div class="t" style="left:2878.66px;top:1654.09px;font-size:25.56px;line-height:25.56px;color:#3a4550;transform:scaleX(1.1529);word-spacing:-0.29px;">50% to &lt; 80%</div>
<div class="r" style="left:2199px;top:1699.56px;width:30.20px;height:30.30px;box-sizing:border-box;border:2px solid #7b7b7b;border-radius:5px;"></div>
<div class="t" style="left:2235.78px;top:1702.12px;font-size:25.56px;line-height:25.56px;color:#3a4550;transform:scaleX(1.0598);">48</div>
<div class="t" style="left:2307.70px;top:1699.42px;font-size:25.56px;line-height:25.56px;color:#3a4550;transform:scaleX(1.0430);">013</div>
<div class="t" style="left:2438.34px;top:1699.42px;font-size:25.56px;line-height:25.56px;color:#3a4550;transform:scaleX(1.0738);">9606.02</div>
<div class="t" style="left:2587.74px;top:1699.42px;font-size:25.56px;line-height:25.56px;color:#3a4550;transform:scaleX(1.0894);">41700</div>
<div class="t" style="left:2721.16px;top:1699.42px;font-size:25.56px;line-height:25.56px;color:#3a4550;transform:scaleX(1.0798);">Upper</div>
<div class="t" style="left:2878.66px;top:1699.42px;font-size:25.56px;line-height:25.56px;color:#3a4550;transform:scaleX(1.1412);word-spacing:-0.22px;">50% to &lt; 80%</div>
<div class="r" style="left:2199px;top:1744.8899999999999px;width:30.20px;height:30.30px;box-sizing:border-box;border:2px solid #7b7b7b;border-radius:5px;"></div>
<div class="t" style="left:2235.78px;top:1747.45px;font-size:25.56px;line-height:25.56px;color:#3a4550;transform:scaleX(1.0598);">48</div>
<div class="t" style="left:2307.70px;top:1744.75px;font-size:25.56px;line-height:25.56px;color:#3a4550;transform:scaleX(1.0430);">019</div>
<div class="t" style="left:2438.34px;top:1744.75px;font-size:25.56px;line-height:25.56px;color:#3a4550;transform:scaleX(1.0738);">0001.01</div>
<div class="t" style="left:2587.74px;top:1744.75px;font-size:25.56px;line-height:25.56px;color:#3a4550;transform:scaleX(1.0894);">41700</div>
<div class="t" style="left:2721.16px;top:1744.75px;font-size:25.56px;line-height:25.56px;color:#3a4550;transform:scaleX(1.0198);">Middle</div>
<div class="t" style="left:2878.66px;top:1744.75px;font-size:25.56px;line-height:25.56px;color:#3a4550;transform:scaleX(1.1529);word-spacing:-0.29px;">20% to &lt; 50%</div>
<div class="r" style="left:2199px;top:1790.2199999999998px;width:30.20px;height:30.30px;box-sizing:border-box;border:2px solid #7b7b7b;border-radius:5px;"></div>
<div class="t" style="left:2235.78px;top:1792.78px;font-size:25.56px;line-height:25.56px;color:#3a4550;transform:scaleX(1.0598);">48</div>
<div class="t" style="left:2307.70px;top:1790.08px;font-size:25.56px;line-height:25.56px;color:#3a4550;transform:scaleX(1.0430);">019</div>
<div class="t" style="left:2438.34px;top:1790.08px;font-size:25.56px;line-height:25.56px;color:#3a4550;transform:scaleX(1.0738);">0001.03</div>
<div class="t" style="left:2587.74px;top:1790.08px;font-size:25.56px;line-height:25.56px;color:#3a4550;transform:scaleX(1.0894);">41700</div>
<div class="t" style="left:2721.16px;top:1790.08px;font-size:25.56px;line-height:25.56px;color:#3a4550;transform:scaleX(1.0240);">Moderate</div>
<div class="t" style="left:2878.66px;top:1790.08px;font-size:25.56px;line-height:25.56px;color:#3a4550;transform:scaleX(1.1489);word-spacing:-0.27px;">20% to &lt; 50%</div>
<div class="r" style="left:2079px;top:1420px;width:70.00px;height:54.50px;background:#d3d7de;border-radius:5px;"></div>
<div class="r" style="left:2079px;top:1484px;width:70.00px;height:54.50px;background:#d3d7de;border-radius:5px;"></div>
<div class="r" style="left:2079px;top:1548px;width:70.00px;height:54.50px;background:#d3d7de;border-radius:5px;"></div>
<div class="r" style="left:2079px;top:1612px;width:70.00px;height:54.50px;background:#4b0055;border-radius:5px;"></div>
<svg class="r" style="left:2104px;top:1438px" width="20" height="20" viewBox="0 0 20 20"><polyline points="6.5,3.5 13.5,10.3 6.5,17" fill="none" stroke="#222" stroke-width="1.7"/></svg>
<svg class="r" style="left:2104px;top:1502px" width="20" height="20" viewBox="0 0 20 20"><polyline points="13.5,3.5 6.5,10.3 13.5,17" fill="none" stroke="#222" stroke-width="1.7"/></svg>
<svg class="r" style="left:2104px;top:1566px" width="20" height="20" viewBox="0 0 20 20"><polyline points="3.5,3.7 10,10.2 3.5,16.7" fill="none" stroke="#222" stroke-width="1.7"/><polyline points="9.5,3.7 16,10.2 9.5,16.7" fill="none" stroke="#222" stroke-width="1.7"/></svg>
<svg class="r" style="left:2104px;top:1630px" width="20" height="20" viewBox="0 0 20 20"><polyline points="10.5,3.7 4,10.2 10.5,16.7" fill="none" stroke="#fff" stroke-width="1.7"/><polyline points="16.5,3.7 10,10.2 16.5,16.7" fill="none" stroke="#fff" stroke-width="1.7"/></svg>
<div class="r" style="left:3087px;top:1669px;width:128px;height:128px;border-radius:50%;background:#4b0055;box-shadow:0 10px 40px rgba(40,65,65,0.2);"></div>
<div class="r" style="left:3121px;top:1715px;width:60.00px;height:30.00px;background:#fff;border-radius:15px;"></div>
<svg class="r" style="left:3150px;top:1745px" width="25" height="25" viewBox="0 0 25 25"><polygon points="7,6 19,6 19,18" fill="#fff"/></svg>
<div class="r" style="left:0px;top:0px;width:3254.00px;height:7.00px;background:#000;"></div>
<div class="r" style="left:0px;top:1829px;width:3254.00px;height:7.00px;background:#000;"></div>
<div class="r" style="left:0px;top:0px;width:7.00px;height:1836.00px;background:#000;"></div>
<div class="r" style="left:3247px;top:0px;width:7.00px;height:1836.00px;background:#000;"></div>
</body></html>
